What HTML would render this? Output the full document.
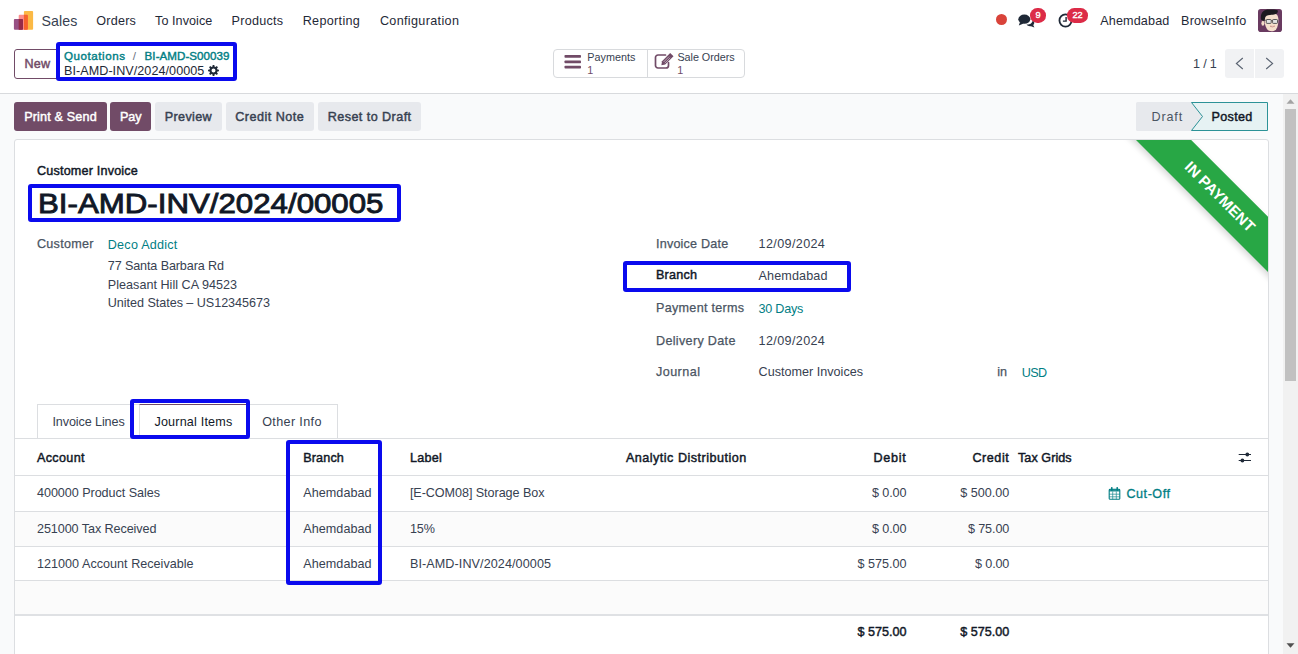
<!DOCTYPE html>
<html lang="en">
<head>
<meta charset="utf-8">
<title>BI-AMD-INV/2024/00005</title>
<style>
*{box-sizing:border-box;margin:0;padding:0}
html,body{width:1298px;height:654px;overflow:hidden;background:#fff}
body{font-family:"Liberation Sans",sans-serif;font-size:13.4px;color:#374151;position:relative}
.abs{position:absolute;white-space:nowrap;line-height:1}
.box{position:absolute}
.btn{position:absolute;top:102px;height:29px;border-radius:3px}
.pri{background:#714b67}
.sec{background:#e7e9ed}
.hl{position:absolute;border:4px solid #0a0aee;border-radius:3px}
.row{position:absolute;left:15px;width:1253px}
.hline{position:absolute;left:15px;width:1253px;height:1px;background:#dcdee1}
</style>
</head>
<body>

<!-- ================= NAVBAR ================= -->
<svg class="abs" style="left:13px;top:10px" width="21" height="20" viewBox="13 10 21 20">
  <rect x="23.900" y="10.900" width="9.200" height="18.900" rx="1" fill="#fbb945"/>
  <rect x="18.700" y="14.800" width="9.200" height="15" rx="1" fill="#fb8d8d"/>
  <path d="M23.900 14.800 H26.900 A1 1 0 0 1 27.900 15.800 V28.800 A1 1 0 0 1 26.900 29.800 H23.900 Z" fill="#f7632a"/>
  <rect x="13.900" y="18.900" width="9.100" height="10.900" rx="1" fill="#985184"/>
  <path d="M18.700 18.900 H22 A1 1 0 0 1 23 19.900 V28.800 A1 1 0 0 1 22 29.800 H18.700 Z" fill="#962b48"/>
</svg>
<div class="box" style="left:996px;top:14px;width:11px;height:11px;border-radius:50%;background:#d9433a"></div>
<!-- chat icon -->
<svg class="abs" style="left:1018px;top:14px" width="18" height="14" viewBox="0 0 18 14">
  <ellipse cx="6.3" cy="5.2" rx="6" ry="4.6" fill="#1f2937"/>
  <path d="M2 8 L0.8 11.6 L5.6 9.4 Z" fill="#1f2937"/>
  <path d="M8.6 10.6 C11.8 10.8 14.6 9 14.6 6.2 C16.6 7.2 16.8 9.8 15.2 11 L16.4 13.4 L13 12.2 C11.2 12.6 9.4 11.9 8.600 10.6 Z" fill="#1f2937"/>
</svg>
<div class="box" style="left:1030px;top:8.400px;width:16px;height:14.600px;border-radius:7.300px;background:#dc2b47"></div>
<!-- clock icon -->
<svg class="abs" style="left:1057.900px;top:12.900px" width="15" height="15" viewBox="0 0 15 15">
  <circle cx="7.500" cy="7.500" r="6.050" fill="none" stroke="#1f2937" stroke-width="1.800"/>
  <path d="M8.100 4 V8.100 H4.900" fill="none" stroke="#1f2937" stroke-width="1.400"/>
</svg>
<div class="box" style="left:1067.300px;top:8.400px;width:20.400px;height:14.600px;border-radius:7.300px;background:#dc2b47"></div>
<div class="abs" style="left:1030px;top:11px;width:16px;text-align:center;font-size:9.200px;color:#fff;-webkit-text-stroke:0.350px #fff">9</div>
<div class="abs" style="left:1067.300px;top:11px;width:20.400px;text-align:center;font-size:9.200px;color:#fff;-webkit-text-stroke:0.350px #fff">22</div>
<!-- avatar -->
<svg class="abs" style="left:1258px;top:9px" width="24" height="23" viewBox="0 0 24 23">
  <rect width="24" height="23" rx="2.800" fill="#693a60"/>
  <ellipse cx="4.900" cy="14.200" rx="1.500" ry="2.500" fill="#f3dcc8"/>
  <path d="M6.300 9 C6.300 5 9 3.500 13 3.500 C17.500 3.500 20.400 6 20.400 10.500 C20.400 14.500 19.800 18 18.200 20.200 C17 21.700 15.500 22.300 13.600 22.300 C11.700 22.300 10 21.600 8.800 19.800 C7.200 17.300 6.300 13 6.300 9 Z" fill="#f5dfcc"/>
  <path d="M3 10.500 C2 4 5.500 0.600 11 0.600 C15 0.400 18.500 0.500 19.800 1.600 C20.300 4 18.500 5.600 15 5.800 C11.500 6 8.800 6.200 7.600 7.800 C6.800 9 6.900 11 6.700 12.200 C5.500 11.600 4 11.800 3 10.500 Z" fill="#1c1a1f"/>
  <rect x="8.300" y="10.500" width="4.900" height="3.900" rx="0.700" fill="#e3e3e3" stroke="#4a4a4c" stroke-width="0.900"/>
  <rect x="14.600" y="10.500" width="4.900" height="3.900" rx="0.700" fill="#e3e3e3" stroke="#4a4a4c" stroke-width="0.900"/>
  <path d="M13.200 11.600 H14.600 M8.300 11.300 L6.600 11" stroke="#4a4a4c" stroke-width="0.800"/>
  <path d="M12 17.200 Q14.500 18.900 16.900 17.100 Q14.500 17.500 12 17.200 Z" fill="#fff" stroke="#b9736a" stroke-width="0.500"/>
</svg>

<!-- ================= CONTROL PANEL ================= -->
<div class="box" style="left:0;top:93px;width:1298px;height:1px;background:#d8dadd"></div>
<div class="box" style="left:14px;top:49px;width:45px;height:30px;border:1px solid #714b67;border-radius:3px;background:#fff"></div>
<!-- gear -->
<svg class="abs" style="left:208px;top:64.700px" width="11" height="11" viewBox="-10 -10 20 20">
  <path fill="#1f2937" fill-rule="evenodd" d="M7.18 -1.80 L9.88 -1.56 L9.88 1.56 L7.18 1.80 L6.35 3.80 L8.09 5.88 L5.88 8.09 L3.80 6.35 L1.80 7.18 L1.56 9.88 L-1.56 9.88 L-1.80 7.18 L-3.80 6.35 L-5.88 8.09 L-8.09 5.88 L-6.35 3.80 L-7.18 1.80 L-9.88 1.56 L-9.88 -1.56 L-7.18 -1.80 L-6.35 -3.80 L-8.09 -5.88 L-5.88 -8.09 L-3.80 -6.35 L-1.80 -7.18 L-1.56 -9.88 L1.56 -9.88 L1.80 -7.18 L3.80 -6.35 L5.88 -8.09 L8.09 -5.880 L6.35 -3.80 Z M3.60 0 A3.60 3.60 0 1 0 -3.60 0 A3.60 3.60 0 1 0 3.60 0 Z"/>
</svg>

<!-- stat buttons -->
<div class="box" style="left:553px;top:49px;width:192px;height:29px;border:1px solid #d8dadd;border-radius:4px;background:#fff"></div>
<div class="box" style="left:647px;top:49px;width:1px;height:29px;background:#d8dadd"></div>
<svg class="abs" style="left:564px;top:54px" width="18" height="16" viewBox="0 0 18 16">
  <rect x="0.5" y="1" width="16.500" height="2.800" rx="0.800" fill="#714b67"/>
  <rect x="0.5" y="6.400" width="16.500" height="2.800" rx="0.800" fill="#714b67"/>
  <rect x="0.5" y="11.800" width="16.500" height="2.800" rx="0.800" fill="#714b67"/>
</svg>
<svg class="abs" style="left:653.500px;top:52.400px" width="21" height="18" viewBox="0 0 21 18">
  <path d="M14.500 10.500 V13.500 A2.500 2.500 0 0 1 12 16 H4 A2.500 2.500 0 0 1 1.500 13.500 V5.500 A2.500 2.500 0 0 1 4 3 H11.500" fill="none" stroke="#714b67" stroke-width="1.700" stroke-linecap="round"/>
  <path d="M16.200 1 L19.500 4.300 L11.200 12.600 L7.400 13.200 L8 9.300 Z" fill="#714b67"/>
  <path d="M9.600 10 L15 4.600 M10.800 11.200 L16.200 5.800" stroke="#fff" stroke-width="0.500"/>
</svg>

<!-- pager -->
<div class="box" style="left:1225px;top:49px;width:29px;height:29px;background:#f1f2f4;border-radius:3px 0 0 3px"></div>
<div class="box" style="left:1255px;top:49px;width:29px;height:29px;background:#f1f2f4;border-radius:0 3px 3px 0"></div>
<svg class="abs" style="left:1234px;top:57px" width="12" height="13" viewBox="0 0 12 13"><path d="M8.800 1 L2.400 6.500 L8.800 12" fill="none" stroke="#5b6472" stroke-width="1.150"/></svg>
<svg class="abs" style="left:1263px;top:57px" width="12" height="13" viewBox="0 0 12 13"><path d="M3.200 1 L9.600 6.500 L3.200 12" fill="none" stroke="#5b6472" stroke-width="1.150"/></svg>

<!-- ================= CONTENT BG ================= -->
<div class="box" style="left:0;top:94px;width:1283px;height:560px;background:#f9fafb"></div>
<!-- scrollbar -->
<div class="box" style="left:1283px;top:94px;width:15px;height:560px;background:#f1f1f1"></div>
<div class="box" style="left:1285px;top:109px;width:11px;height:272px;background:#c1c1c1"></div>
<svg class="abs" style="left:1286px;top:99px" width="9" height="5" viewBox="0 0 9 5"><path d="M0.500 4.800 L4.500 0.300 L8.500 4.800 Z" fill="#a3a3a3"/></svg>
<svg class="abs" style="left:1286px;top:643px" width="9" height="5" viewBox="0 0 9 5"><path d="M0.500 0.300 L4.500 4.800 L8.500 0.300 Z" fill="#505050"/></svg>

<!-- status bar buttons -->
<div class="btn pri" style="left:14px;width:93px"></div>
<div class="btn pri" style="left:110px;width:41px"></div>
<div class="btn sec" style="left:155px;width:67px"></div>
<div class="btn sec" style="left:226px;width:88px"></div>
<div class="btn sec" style="left:318px;width:103px"></div>

<!-- status pills -->
<svg class="abs" style="left:1136px;top:101px" width="134" height="31" viewBox="0 0 134 31">
  <path d="M1.500 1 H56 L67 15.500 L56 30 H1.500 A1.500 1.500 0 0 1 0 28.500 V2.500 A1.500 1.500 0 0 1 1.500 1 Z" fill="#e7e9ed"/>
  <path d="M55.500 1.500 H131.500 V29.500 H55.500 L66.500 15.500 Z" fill="#e6f2f3" stroke="#2b9297" stroke-width="1"/>
</svg>

<!-- ================= SHEET ================= -->
<div class="box" style="left:14px;top:139px;width:1255px;height:520px;background:#fff;border:1px solid #dcdee1;border-radius:3px 3px 0 0;overflow:hidden">
  <div style="position:absolute;left:1084.650px;top:36.650px;width:240px;height:39.400px;background:#28a745;transform:rotate(45deg);box-shadow:0 3px 6px rgba(0,0,0,0.16);color:#fff;font-weight:bold;font-size:15.200px;text-align:center;line-height:39.400px;letter-spacing:0.100px;white-space:nowrap">IN PAYMENT</div>
</div>

<!-- tabs -->
<div class="box" style="left:37px;top:404px;width:301px;height:35px;border:1px solid #dcdee1;border-bottom:none;background:#fff"></div>
<div class="box" style="left:139px;top:404px;width:110px;height:35px;border:1px solid #dcdee1;border-top-color:#714b67;border-bottom:none;background:#fff"></div>

<!-- table -->
<div class="row" style="top:512px;height:34px;background:#fbfbfb"></div>
<div class="row" style="top:581px;height:33px;background:#fbfbfb"></div>
<div class="hline" style="top:438px"></div>
<div class="box" style="left:140px;top:438px;width:108px;height:1px;background:#fff"></div>
<div class="hline" style="top:475px"></div>
<div class="hline" style="top:511px"></div>
<div class="hline" style="top:546px"></div>
<div class="hline" style="top:580px"></div>
<div class="hline" style="top:614px;height:2px;background:#dfe1e4"></div>

<!-- column settings icon -->
<svg class="abs" style="left:1238px;top:452px" width="14" height="12" viewBox="0 0 14 12">
  <path d="M0.700 2.500 H13 M0.700 8.500 H13" stroke="#1f2937" stroke-width="1"/>
  <circle cx="9.300" cy="2.500" r="1.900" fill="#1f2937"/>
  <circle cx="4.400" cy="8.500" r="1.900" fill="#1f2937"/>
</svg>
<!-- calendar icon -->
<svg class="abs" style="left:1108px;top:487px" width="13" height="13" viewBox="0 0 13 13">
  <rect x="1.200" y="2.300" width="10.600" height="10" rx="0.900" fill="#fff" stroke="#017e84" stroke-width="1.100"/>
  <rect x="1.200" y="2.300" width="10.600" height="2.200" fill="#017e84" opacity="0.850"/>
  <path d="M1.200 7.200 H11.800 M1.200 9.800 H11.800 M4.700 4.500 V12.300 M8.300 4.500 V12.300" stroke="#017e84" stroke-width="0.700" opacity="0.900"/>
  <path d="M3.800 0.700 V3.200 M9.200 0.700 V3.200" stroke="#017e84" stroke-width="1.500" stroke-linecap="round"/>
</svg>

<!-- ================= TEXT ================= -->
<div class="abs" style="left:41.6px;top:14px;font-size:14.2px;letter-spacing:0.04px;color:#374151;">Sales</div>
<div class="abs" style="left:96.3px;top:15px;font-size:12.6px;letter-spacing:0.22px;color:#1f2937;">Orders</div>
<div class="abs" style="left:155.1px;top:15px;font-size:12.6px;letter-spacing:0.05px;color:#1f2937;">To Invoice</div>
<div class="abs" style="left:231.6px;top:15px;font-size:12.6px;letter-spacing:0.25px;color:#1f2937;">Products</div>
<div class="abs" style="left:302.7px;top:15px;font-size:12.6px;letter-spacing:0.32px;color:#1f2937;">Reporting</div>
<div class="abs" style="left:379.9px;top:15px;font-size:12.6px;letter-spacing:0.34px;color:#1f2937;">Configuration</div>
<div class="abs" style="left:1100.2px;top:15px;font-size:12.6px;letter-spacing:0.15px;color:#1f2937;">Ahemdabad</div>
<div class="abs" style="left:1181.0px;top:15px;font-size:12.6px;letter-spacing:0.24px;color:#1f2937;">BrowseInfo</div>
<div class="abs" style="left:24.4px;top:58px;font-size:12.6px;letter-spacing:0.27px;color:#714b67;-webkit-text-stroke:0.45px #714b67;">New</div>
<div class="abs" style="left:64.0px;top:50px;font-size:11.6px;letter-spacing:0.55px;color:#017e84;-webkit-text-stroke:0.4px #017e84;">Quotations</div>
<div class="abs" style="left:132.8px;top:50px;font-size:11.6px;letter-spacing:0.00px;color:#6b7280;">/</div>
<div class="abs" style="left:144.6px;top:50px;font-size:11.6px;letter-spacing:0.04px;color:#017e84;-webkit-text-stroke:0.4px #017e84;">BI-AMD-S00039</div>
<div class="abs" style="left:64.0px;top:65px;font-size:12.6px;letter-spacing:0.05px;color:#1f2937;">BI-AMD-INV/2024/00005</div>
<div class="abs" style="left:587.3px;top:52px;font-size:10.8px;letter-spacing:0.02px;color:#374151;">Payments</div>
<div class="abs" style="left:587.2px;top:65px;font-size:10.8px;letter-spacing:0.00px;color:#714b67;">1</div>
<div class="abs" style="left:677.4px;top:52px;font-size:10.8px;letter-spacing:-0.03px;color:#374151;">Sale Orders</div>
<div class="abs" style="left:677.2px;top:65px;font-size:10.8px;letter-spacing:0.00px;color:#714b67;">1</div>
<div class="abs" style="left:1193.1px;top:58px;font-size:12.6px;letter-spacing:-0.18px;color:#374151;">1 / 1</div>
<div class="abs" style="left:24.2px;top:111px;font-size:12.6px;letter-spacing:0.16px;color:#fff;-webkit-text-stroke:0.45px #fff;">Print &amp; Send</div>
<div class="abs" style="left:120.0px;top:111px;font-size:12.6px;letter-spacing:-0.07px;color:#fff;-webkit-text-stroke:0.45px #fff;">Pay</div>
<div class="abs" style="left:164.7px;top:111px;font-size:12.6px;letter-spacing:0.37px;color:#374151;-webkit-text-stroke:0.45px #374151;">Preview</div>
<div class="abs" style="left:235.3px;top:111px;font-size:12.6px;letter-spacing:0.47px;color:#374151;-webkit-text-stroke:0.45px #374151;">Credit Note</div>
<div class="abs" style="left:327.7px;top:111px;font-size:12.6px;letter-spacing:0.44px;color:#374151;-webkit-text-stroke:0.45px #374151;">Reset to Draft</div>
<div class="abs" style="left:1151.5px;top:111px;font-size:12.6px;letter-spacing:0.86px;color:#4b5563;">Draft</div>
<div class="abs" style="left:1211.6px;top:111px;font-size:12.6px;letter-spacing:0.31px;color:#111827;-webkit-text-stroke:0.45px #111827;">Posted</div>
<div class="abs" style="left:37.0px;top:165px;font-size:12.6px;letter-spacing:0.19px;color:#111827;-webkit-text-stroke:0.45px #111827;">Customer Invoice</div>
<div class="abs" style="left:37.9px;top:189px;font-size:28.2px;transform:scaleX(1.1081);transform-origin:0 0;color:#111827;-webkit-text-stroke:0.9px #111827;">BI-AMD-INV/2024/00005</div>
<div class="abs" style="left:37.0px;top:238px;font-size:12.6px;letter-spacing:0.26px;color:#4b5563;-webkit-text-stroke:0.25px #4b5563;">Customer</div>
<div class="abs" style="left:107.8px;top:239px;font-size:12.6px;letter-spacing:0.23px;color:#017e84;">Deco Addict</div>
<div class="abs" style="left:107.8px;top:260px;font-size:12.6px;letter-spacing:-0.12px;color:#374151;">77 Santa Barbara Rd</div>
<div class="abs" style="left:107.8px;top:279px;font-size:12.6px;letter-spacing:0.02px;color:#374151;">Pleasant Hill CA 94523</div>
<div class="abs" style="left:107.8px;top:297px;font-size:12.6px;letter-spacing:-0.04px;color:#374151;">United States – US12345673</div>
<div class="abs" style="left:656.0px;top:238px;font-size:12.6px;letter-spacing:0.20px;color:#4b5563;-webkit-text-stroke:0.25px #4b5563;">Invoice Date</div>
<div class="abs" style="left:758.6px;top:238px;font-size:12.6px;letter-spacing:0.36px;color:#374151;">12/09/2024</div>
<div class="abs" style="left:656.0px;top:269px;font-size:12.6px;letter-spacing:0.22px;color:#111827;-webkit-text-stroke:0.45px #111827;">Branch</div>
<div class="abs" style="left:758.6px;top:270px;font-size:12.6px;letter-spacing:0.12px;color:#374151;">Ahemdabad</div>
<div class="abs" style="left:656.0px;top:302px;font-size:12.6px;letter-spacing:0.29px;color:#4b5563;-webkit-text-stroke:0.25px #4b5563;">Payment terms</div>
<div class="abs" style="left:758.6px;top:303px;font-size:12.6px;letter-spacing:-0.26px;color:#017e84;">30 Days</div>
<div class="abs" style="left:656.0px;top:335px;font-size:12.6px;letter-spacing:0.32px;color:#4b5563;-webkit-text-stroke:0.25px #4b5563;">Delivery Date</div>
<div class="abs" style="left:758.6px;top:335px;font-size:12.6px;letter-spacing:0.36px;color:#374151;">12/09/2024</div>
<div class="abs" style="left:656.0px;top:366px;font-size:12.6px;letter-spacing:0.44px;color:#4b5563;-webkit-text-stroke:0.25px #4b5563;">Journal</div>
<div class="abs" style="left:758.6px;top:366px;font-size:12.6px;letter-spacing:0.01px;color:#374151;">Customer Invoices</div>
<div class="abs" style="left:997.2px;top:366px;font-size:12.6px;letter-spacing:0.09px;color:#4b5563;-webkit-text-stroke:0.25px #4b5563;">in</div>
<div class="abs" style="left:1021.8px;top:367px;font-size:12.6px;letter-spacing:-0.66px;color:#017e84;">USD</div>
<div class="abs" style="left:52.4px;top:416px;font-size:12.6px;letter-spacing:-0.10px;color:#374151;">Invoice Lines</div>
<div class="abs" style="left:154.4px;top:416px;font-size:12.6px;letter-spacing:0.19px;color:#111827;">Journal Items</div>
<div class="abs" style="left:262.2px;top:416px;font-size:12.6px;letter-spacing:0.36px;color:#374151;">Other Info</div>
<div class="abs" style="left:37.0px;top:452px;font-size:12.6px;letter-spacing:0.33px;color:#111827;-webkit-text-stroke:0.45px #111827;">Account</div>
<div class="abs" style="left:303.2px;top:452px;font-size:12.6px;letter-spacing:0.15px;color:#111827;-webkit-text-stroke:0.45px #111827;">Branch</div>
<div class="abs" style="left:409.9px;top:452px;font-size:12.6px;letter-spacing:0.25px;color:#111827;-webkit-text-stroke:0.45px #111827;">Label</div>
<div class="abs" style="left:625.9px;top:452px;font-size:12.6px;letter-spacing:0.49px;color:#111827;-webkit-text-stroke:0.45px #111827;">Analytic Distribution</div>
<div class="abs" style="left:873.4px;top:452px;font-size:12.6px;letter-spacing:0.74px;color:#111827;-webkit-text-stroke:0.45px #111827;">Debit</div>
<div class="abs" style="left:972.5px;top:452px;font-size:12.6px;letter-spacing:0.52px;color:#111827;-webkit-text-stroke:0.45px #111827;">Credit</div>
<div class="abs" style="left:1018.0px;top:452px;font-size:12.6px;letter-spacing:0.05px;color:#111827;-webkit-text-stroke:0.45px #111827;">Tax Grids</div>
<div class="abs" style="left:37.0px;top:487px;font-size:12.6px;letter-spacing:-0.05px;color:#374151;">400000 Product Sales</div>
<div class="abs" style="left:303.2px;top:487px;font-size:12.6px;letter-spacing:0.06px;color:#374151;">Ahemdabad</div>
<div class="abs" style="left:409.9px;top:487px;font-size:12.6px;letter-spacing:-0.06px;color:#374151;">[E-COM08] Storage Box</div>
<div class="abs" style="left:871.9px;top:487px;font-size:12.6px;letter-spacing:-0.07px;color:#374151;">$ 0.00</div>
<div class="abs" style="left:960.3px;top:487px;font-size:12.6px;letter-spacing:-0.02px;color:#374151;">$ 500.00</div>
<div class="abs" style="left:37.0px;top:523px;font-size:12.6px;letter-spacing:-0.08px;color:#374151;">251000 Tax Received</div>
<div class="abs" style="left:303.2px;top:523px;font-size:12.6px;letter-spacing:0.06px;color:#374151;">Ahemdabad</div>
<div class="abs" style="left:409.9px;top:523px;font-size:12.6px;letter-spacing:-0.11px;color:#374151;">15%</div>
<div class="abs" style="left:871.9px;top:523px;font-size:12.6px;letter-spacing:-0.07px;color:#374151;">$ 0.00</div>
<div class="abs" style="left:967.9px;top:523px;font-size:12.6px;letter-spacing:-0.10px;color:#374151;">$ 75.00</div>
<div class="abs" style="left:37.0px;top:558px;font-size:12.6px;letter-spacing:0.02px;color:#374151;">121000 Account Receivable</div>
<div class="abs" style="left:303.2px;top:558px;font-size:12.6px;letter-spacing:0.06px;color:#374151;">Ahemdabad</div>
<div class="abs" style="left:409.9px;top:558px;font-size:12.6px;letter-spacing:0.09px;color:#374151;">BI-AMD-INV/2024/00005</div>
<div class="abs" style="left:857.5px;top:558px;font-size:12.6px;letter-spacing:-0.00px;color:#374151;">$ 575.00</div>
<div class="abs" style="left:975.1px;top:558px;font-size:12.6px;letter-spacing:-0.15px;color:#374151;">$ 0.00</div>
<div class="abs" style="left:1126.5px;top:488px;font-size:12.6px;letter-spacing:0.51px;color:#017e84;-webkit-text-stroke:0.3px #017e84;">Cut-Off</div>
<div class="abs" style="left:857.5px;top:626px;font-size:12.6px;letter-spacing:-0.00px;color:#111827;-webkit-text-stroke:0.45px #111827;">$ 575.00</div>
<div class="abs" style="left:960.3px;top:626px;font-size:12.6px;letter-spacing:-0.02px;color:#111827;-webkit-text-stroke:0.45px #111827;">$ 575.00</div>

<!-- ================= HIGHLIGHT BOXES ================= -->
<div class="hl" style="left:56px;top:42px;width:181px;height:39px"></div>
<div class="hl" style="left:28px;top:184px;width:373px;height:38px"></div>
<div class="hl" style="left:623px;top:261px;width:228px;height:31px"></div>
<div class="hl" style="left:130px;top:399px;width:120px;height:40px"></div>
<div class="hl" style="left:286px;top:440px;width:96px;height:145px"></div>

</body>
</html>
